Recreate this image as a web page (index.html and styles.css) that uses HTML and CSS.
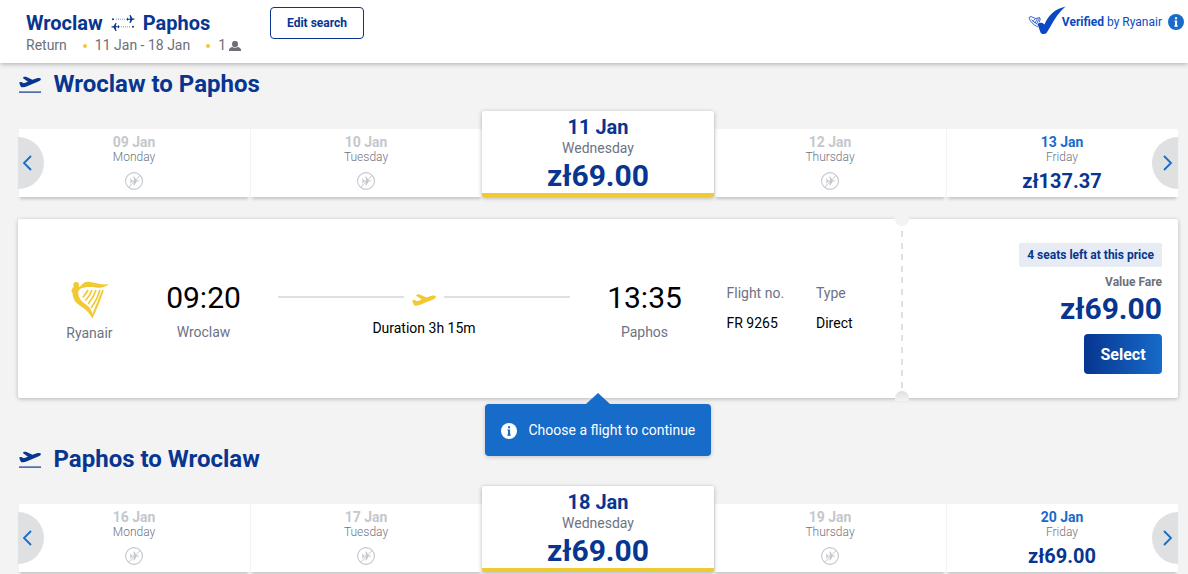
FILE: index.html
```html
<!DOCTYPE html>
<html lang="en">
<head>
    <meta charset="UTF-8">
    <meta name="viewport" content="width=device-width, initial-scale=1.0">
    <title>Wroclaw - Paphos</title>
    <link rel="stylesheet" href="styles.css">
</head>
<body>
    <!-- shared icons -->
    <svg class="sprite" width="0" height="0">
        <symbol id="plane" viewBox="0 0 24 12">
            <path d="M.2 6.8C.8 5.8 2 5.7 3.2 6.3L5.2 7.3 9.8 5.6 4.2 1.7C4.6.6 6 .1 7.6.4L14.6 3.6 19.6 1.8C21.5 1.2 23.4 1.6 23.9 2.5 24 3.7 23 4.6 21.6 5.2L8.8 10.6C5.5 12 2.8 12.2 1.8 10.8Z"/>
        </symbol>
        <symbol id="info" viewBox="0 0 16 16">
            <circle cx="8" cy="8" r="8"/>
            <path class="info-mark" d="M7 3.2h2.1v2H7zM6.4 6.4h2.7v5.1h.7v1.2H6.3v-1.2H7V7.6h-.6z"/>
        </symbol>
        <symbol id="no-flight" viewBox="0 0 18 18">
            <circle cx="9" cy="9" r="8.4" fill="none" stroke="#c4c8cd" stroke-width="1.1"/>
            <path d="M3.7 15.2 15 3.6" stroke="#c4c8cd" stroke-width="1"/>
            <path d="M5 6.7h.8l1.4 1.7h2L8.3 4.6h1l2.4 3.8h1.9c1.1 0 1.1 1.2 0 1.2h-1.9L9.3 13.4h-1l.9-3.8h-2L5.8 11.3H5l.6-2.3z" fill="#c4c8cd"/>
        </symbol>
    </svg>

    <header class="header">
        <div class="trip">
            <div class="trip-route">
                <span>Wroclaw</span>
                <svg class="route-icon" width="24" height="16" viewBox="0 0 24 16">
                    <g id="route-arrow">
                        <circle cx="2" cy="4.2" r="1"/>
                        <path d="M5 4.2h11" stroke="#073590" stroke-width="1" stroke-dasharray="1 1" opacity=".5"/>
                        <path d="M16 2.5l1.3 1.2h2L18.5 0h1l2 3.6h1.3c1.2 0 1.2 1.2 0 1.2h-1.3L19.5 8h-1l.8-3.2h-2L16 6z"/>
                    </g>
                    <use href="#route-arrow" transform="rotate(180 12 8)"/>
                </svg>
                <span>Paphos</span>
            </div>
            <div class="trip-details">
                <span>Return</span>
                <i class="dot"></i>
                <span>11 Jan - 18 Jan</span>
                <i class="dot"></i>
                <span>1</span>
                <svg class="person" width="12" height="10" viewBox="0 0 12 10">
                    <ellipse cx="6" cy="3" rx="3" ry="3.2"/>
                    <path d="M0 10V8.6Q.3 6.4 3.6 5.9 6 7.8 8.4 5.9 11.7 6.4 12 8.6V10z"/>
                </svg>
            </div>
        </div>
        <button class="edit-search" type="button">Edit search</button>
        <div class="verified">
            <svg width="38" height="28" viewBox="0 0 38 28">
                <path d="M9.5 17C12 15 14.5 15.5 16.5 17.5 20 8 27 2 37.5-.6 31 5 26.5 12 22.5 19.5L18.5 26C17 27.5 14 27.5 12.5 25.5Z" fill="#0b48c4"/>
                <path d="M1 10.5Q3 8.5 5 10.5T12 10.5M1 10.5Q2 16 10 20M3.5 12.5Q5 15 9.5 17M11.5 11 9 16M9.5 11.5 7 16M7.3 11.5 5 14.5M12.5 11.5 11 15.5" fill="none" stroke="#0b48c4" stroke-width=".8"/>
            </svg>
            <span><b>Verified</b> by Ryanair</span>
            <svg class="info-blue" width="16" height="16"><use href="#info"/></svg>
        </div>
    </header>

    <main>
        <section class="journey">
            <h1>
                <svg class="takeoff" width="24" height="18" viewBox="0 0 24 18"><use href="#plane" x="1" width="22" height="12"/><path d="M1 15.5h22v1.2H1z"/></svg>
                Wroclaw to Paphos
            </h1>
            <div class="dates">
                <div class="date disabled"><b>09 Jan</b><span>Monday</span><svg><use href="#no-flight"/></svg></div>
                <div class="date disabled"><b>10 Jan</b><span>Tuesday</span><svg><use href="#no-flight"/></svg></div>
                <div class="date selected"><b>11 Jan</b><span>Wednesday</span><strong>zł69.00</strong></div>
                <div class="date disabled"><b>12 Jan</b><span>Thursday</span><svg><use href="#no-flight"/></svg></div>
                <div class="date"><b>13 Jan</b><span>Friday</span><strong>zł137.37</strong></div>
                <button class="arrow prev" type="button"><svg width="10" height="16" viewBox="0 0 10 16"><path d="M9 1 2 8l7 7"/></svg></button>
                <button class="arrow next" type="button"><svg width="10" height="16" viewBox="0 0 10 16"><path d="M1 1l7 7-7 7"/></svg></button>
            </div>

            <div class="flight">
                <div class="carrier">
                    <svg width="38" height="38" viewBox="0 0 38 38">
                        <circle cx="5.2" cy="3.8" r="2.9"/>
                        <path d="M2 6.3 9 5.6C12 2 14 .4 18 .7 25 1.3 29 4.5 37.7 3 34 6.6 30 7 25 6.4 18 5.6 13 6 9 8L7 11C7.5 17 10 20 15 23.5 19 26.5 21 29.5 21.3 33L31 9.5 33 8.5C30 18 26 28 21.3 37.6 19 33 16 29 11 26 4 22 1.5 17 1.6 12L.2 10z"/>
                        <path d="M17 9Q15 13 11.8 16.5M21 9Q19 15 14.3 19.5M25 9Q22 17 17.3 23M29 9Q26 19 20 27" fill="none" stroke="#f1c933" stroke-width="1.7"/>
                    </svg>
                    <span>Ryanair</span>
                </div>
                <div class="stop">
                    <span class="time">09:20</span>
                    <span>Wroclaw</span>
                </div>
                <div class="duration">
                    <div class="line">
                        <svg width="24" height="12"><use href="#plane"/></svg>
                    </div>
                    <span>Duration 3h 15m</span>
                </div>
                <div class="stop">
                    <span class="time">13:35</span>
                    <span>Paphos</span>
                </div>
                <dl class="info">
                    <dt>Flight no.</dt>
                    <dt>Type</dt>
                    <dd>FR 9265</dd>
                    <dd>Direct</dd>
                </dl>
                <div class="separator"></div>
                <div class="fare">
                    <span class="seats">4 seats left at this price</span>
                    <span class="fare-name">Value Fare</span>
                    <strong>zł69.00</strong>
                    <button class="select" type="button">Select</button>
                </div>
                <div class="tooltip">
                    <svg class="info-white" width="16" height="16"><use href="#info"/></svg>
                    <span>Choose a flight to continue</span>
                </div>
            </div>
        </section>

        <section class="journey">
            <h1>
                <svg class="takeoff" width="24" height="18" viewBox="0 0 24 18"><use href="#plane" x="1" width="22" height="12"/><path d="M1 15.5h22v1.2H1z"/></svg>
                Paphos to Wroclaw
            </h1>
            <div class="dates">
                <div class="date disabled"><b>16 Jan</b><span>Monday</span><svg><use href="#no-flight"/></svg></div>
                <div class="date disabled"><b>17 Jan</b><span>Tuesday</span><svg><use href="#no-flight"/></svg></div>
                <div class="date selected"><b>18 Jan</b><span>Wednesday</span><strong>zł69.00</strong></div>
                <div class="date disabled"><b>19 Jan</b><span>Thursday</span><svg><use href="#no-flight"/></svg></div>
                <div class="date"><b>20 Jan</b><span>Friday</span><strong>zł69.00</strong></div>
                <button class="arrow prev" type="button"><svg width="10" height="16" viewBox="0 0 10 16"><path d="M9 1 2 8l7 7"/></svg></button>
                <button class="arrow next" type="button"><svg width="10" height="16" viewBox="0 0 10 16"><path d="M1 1l7 7-7 7"/></svg></button>
            </div>
        </section>
    </main>
</body>
</html>
```
FILE: styles.css
```css
* {
    box-sizing: border-box;
}

body {
    margin: 0;
    background-color: #f3f3f3;
    color: #6d7383;
    font-family: Roboto, sans-serif;
    font-size: 14px;
    line-height: 20px;
}

b,
strong {
    font-weight: 700;
}

button {
    font-family: inherit;
    cursor: pointer;
}

.sprite {
    position: absolute;
}

/* header */
.header {
    display: flex;
    align-items: flex-start;
    height: 63px;
    padding: 7px 4px 0 26px;
    background-color: #fff;
    box-shadow: 0 1px 5px rgba(0, 0, 0, 0.3);
}

.trip {
    width: 244px;
    padding-top: 4px;
}

.trip-route {
    display: flex;
    align-items: center;
    height: 24px;
    color: #073590;
    font-size: 20px;
    font-weight: bold;
}

.route-icon {
    margin: 0 8px;
    fill: #073590;
}

.trip-details {
    display: flex;
    align-items: center;
    color: #6d7078;
}

.dot {
    width: 4px;
    height: 4px;
    margin: 2px 8px 0 16px;
    border-radius: 50%;
    background-color: #f1c933;
}

.person {
    margin: 2px 0 0 3px;
    fill: #6d7078;
}

.edit-search {
    width: 94px;
    height: 32px;
    padding: 0;
    border: 1px solid #073590;
    border-radius: 4px;
    background-color: #fff;
    color: #073590;
    font-size: 12px;
    font-weight: bold;
}

.verified {
    display: flex;
    align-items: center;
    height: 28px;
    margin-left: auto;
    color: #0b48c4;
    font-size: 12px;
}

.verified svg {
    overflow: visible;
}

.verified span {
    margin: 1px 6px 0 -4px;
}

.info-blue {
    margin-top: 2px;
    fill: #176bc9;
    color: #fff;
}

.info-white {
    fill: #fff;
    color: #176bc9;
}

.info-mark {
    fill: currentColor;
}

/* journey */
.journey {
    height: 375px;
    padding: 5px 10px 0 18px;
}

.journey:last-child {
    height: 136px;
    overflow: hidden;
}

h1 {
    display: flex;
    align-items: center;
    gap: 11.5px;
    height: 32px;
    margin: 0 0 11px;
    color: #073590;
    font-size: 24px;
    font-weight: bold;
}

.takeoff {
    margin-top: 1px;
    fill: #073590;
}

.dates {
    position: relative;
    display: grid;
    grid-template-columns: repeat(5, 232px);
    align-items: end;
    height: 86px;
}

.date {
    display: flex;
    flex-direction: column;
    align-items: center;
    height: 68px;
    padding-top: 6px;
    background-color: #fff;
    box-shadow: inset 1px 0 #f3f3f3, 0 4px 3px -2px rgba(0, 0, 0, 0.2);
    font-size: 12px;
    font-weight: 300;
    line-height: 14px;
}

.date b {
    color: #176bc9;
    font-size: 14px;
    line-height: 15px;
}

.date strong {
    margin-top: 5px;
    color: #073590;
    font-size: 20px;
    line-height: 24px;
}

.date svg {
    width: 18px;
    height: 18px;
    margin-top: 8px;
}

.date.disabled b {
    color: #c4c8cd;
}

.date.selected {
    z-index: 1;
    height: 86px;
    border-bottom: 4px solid #f1c933;
    border-radius: 2px;
    box-shadow: 0 1px 4px rgba(0, 0, 0, 0.3);
    font-size: 14px;
    font-weight: 400;
    line-height: 20px;
}

.date.selected b {
    color: #073590;
    font-size: 20px;
    line-height: 21px;
}

.date.selected strong {
    margin-top: 0;
    font-size: 30px;
    line-height: 35px;
}

.arrow {
    position: absolute;
    top: 26px;
    display: flex;
    align-items: center;
    width: 26px;
    height: 52px;
    border: none;
    background-color: #dfe0e2;
}

.arrow path {
    fill: none;
    stroke: #176bc9;
    stroke-width: 1.8;
}

.prev {
    left: 0;
    padding: 0 0 0 4px;
    border-radius: 0 26px 26px 0;
}

.next {
    right: 0;
    padding: 0 0 0 11px;
    border-radius: 26px 0 0 26px;
}

/* flight card */
.flight {
    position: relative;
    display: flex;
    height: 179px;
    margin-top: 22px;
    background-color: #fff;
    border-radius: 2px;
    box-shadow: 0 1px 4px rgba(0, 0, 0, 0.25);
}

.carrier {
    display: flex;
    flex-direction: column;
    align-items: center;
    gap: 4px;
    width: 142px;
    padding: 62px 0 0 1px;
}

.carrier svg {
    margin-left: 1px;
    fill: #f1c933;
}

.stop {
    display: flex;
    flex-direction: column;
    align-items: center;
    gap: 7px;
    width: 87px;
    padding-top: 62px;
}

.time {
    color: #000;
    font-size: 30px;
    line-height: 34px;
}

.duration {
    display: flex;
    flex-direction: column;
    gap: 12px;
    width: 292px;
    margin: 0 31px;
    padding-top: 73px;
    color: #000;
    text-align: center;
}

.line {
    display: flex;
    gap: 8px;
    height: 14px;
}

.line svg {
    margin-top: 2px;
    fill: #f1c933;
}

.line::before,
.line::after {
    content: "";
    flex: 1;
    height: 2px;
    margin-top: 4px;
    background-color: #dfe0e2;
}

.info {
    display: grid;
    grid-template-columns: 89.5px 86px;
    align-content: start;
    row-gap: 10px;
    margin: 0 0 0 38.5px;
    padding-top: 64px;
}

.info dd {
    margin: 0;
    color: #000;
}

.separator {
    position: relative;
    width: 14px;
    margin-left: -7px;
    background: repeating-linear-gradient(#dfe0e2 0 6px, transparent 6px 11.6px) center 12px / 2px 157px no-repeat;
}

/* notches over the card edges */
.separator::before,
.separator::after {
    content: "";
    position: absolute;
    left: 0;
    width: 14px;
    height: 10px;
    background-color: #f3f3f3;
}

.separator::before {
    top: -3px;
    border-radius: 0 0 7px 7px;
}

.separator::after {
    bottom: -3px;
    border-radius: 7px 7px 0 0;
    background: linear-gradient(#dfdfdf, #f3f3f3);
}

.fare {
    display: flex;
    flex: 1;
    flex-direction: column;
    align-items: flex-end;
    padding: 24px 16px 0 0;
    color: #073590;
    font-size: 12px;
    font-weight: bold;
}

.seats {
    padding: 2px 8px;
    border-radius: 2px;
    background-color: #e6ebf4;
}

.fare-name {
    margin-top: 5px;
    color: #6d7078;
}

.fare strong {
    font-size: 30px;
    line-height: 34px;
}

.select {
    width: 78px;
    height: 40px;
    margin-top: 8px;
    padding: 0;
    border: none;
    border-radius: 4px;
    background: linear-gradient(to right, #073590, #176bc9);
    color: #fff;
    font-size: 16px;
    font-weight: bold;
}

.tooltip {
    position: absolute;
    top: 185px;
    left: 467px;
    display: flex;
    align-items: center;
    gap: 11.5px;
    width: 226px;
    height: 52px;
    padding-left: 16px;
    border-radius: 4px;
    background-color: #176bc9;
    box-shadow: 0 1px 4px rgba(0, 0, 0, 0.2);
    color: #fff;
    white-space: nowrap;
}

.tooltip svg {
    margin-top: 2px;
}

.tooltip::before {
    content: "";
    position: absolute;
    top: -11px;
    left: 101px;
    border: 12px solid transparent;
    border-top: none;
    border-bottom: 11px solid #176bc9;
}
```
